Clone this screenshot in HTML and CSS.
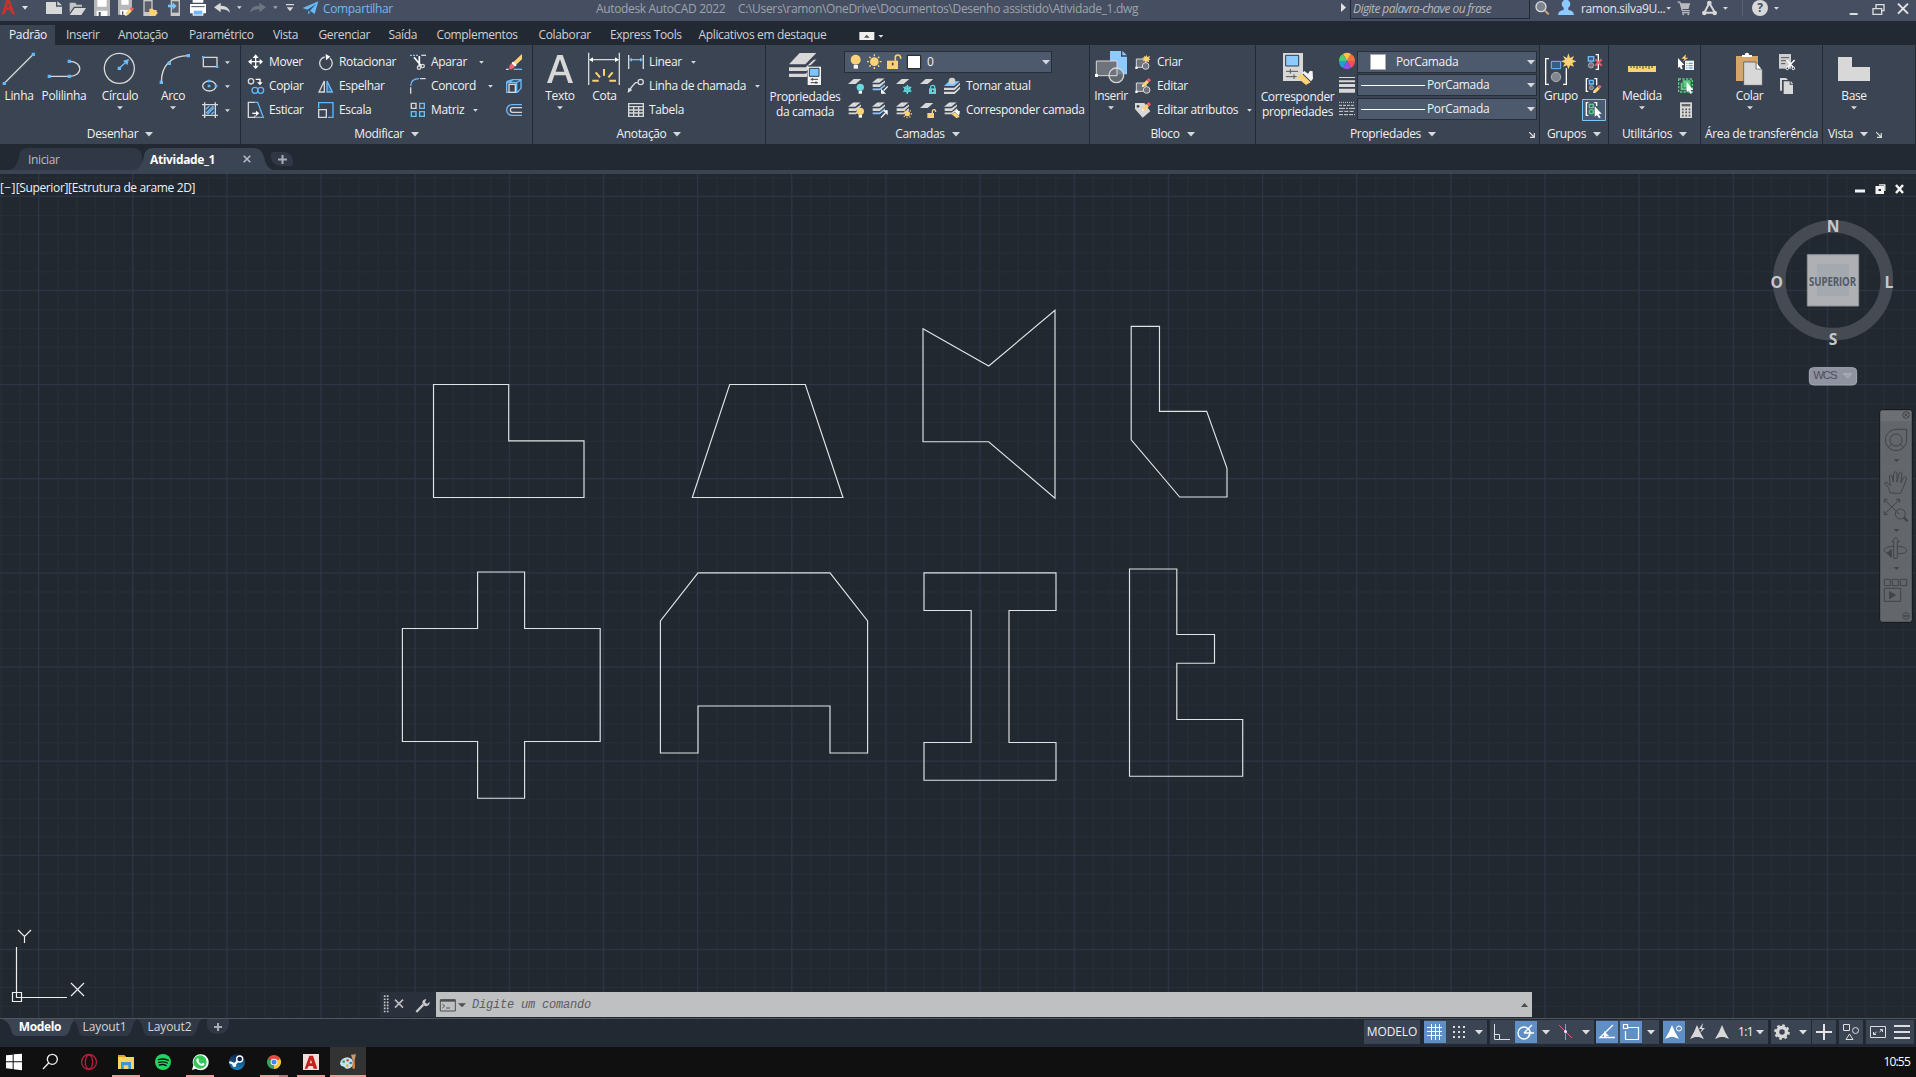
FILE: index.html
```html
<!DOCTYPE html>
<html lang="pt-BR">
<head>
<meta charset="utf-8">
<title>Autodesk AutoCAD 2022</title>
<link rel="stylesheet" href="styles.css">
</head>
<body>
<svg width="0" height="0" class="defs">
  <defs>
    <symbol id="dn" viewBox="0 0 8 5"><path d="M0 0H8L4 4.6Z" fill="#d6d8dc"/></symbol>
    <symbol id="sheet" viewBox="0 0 40 15"><path d="M17 0H40L23 15H0Z" fill="#d8d8d8"/></symbol>
    <symbol id="stack" viewBox="0 0 42 40"><path d="M17 0H40L23 14H0Z" fill="#d8d8d8"/><path d="M2 19H24L41 7V12L25 27H2Z" fill="#d8d8d8"/><path d="M2 32H24L41 19V25L25 38H2Z" fill="#d8d8d8"/></symbol>
    <symbol id="stackb" viewBox="0 0 42 40"><path d="M17 0H40L23 14H0Z" fill="#d8d8d8"/><path d="M2 19H24L41 7V12L25 27H2Z" fill="#d8d8d8"/><path d="M2 32H24L41 19V25L25 38H2Z" fill="#87c5fb"/></symbol>
    <symbol id="pencil" viewBox="0 0 30 30"><path d="M3 27L5 18L17 6L24 13L12 25Z" fill="#fcd277"/><path d="M17 6L23 0L30 7L24 13Z" fill="#f4606c"/><path d="M3 27L5 20L10 25Z" fill="#fff"/></symbol>
  </defs>
</svg>

<header class="titlebar">
  <svg width="42" height="21" viewBox="0 0 126 63"><path d="M4 46L19 0H29L46 46L34 40L30 30H18L15 41Z" fill="#c8332d"/><path d="M21 22H28L24 8Z" fill="#454f61"/><path d="M66 18H84L75 29Z" fill="#e0e0e0"/></svg>
  <svg width="24" height="21" viewBox="126 0 72 63"><path d="M138 6H168V20H186V42H138Z" fill="#d8d8d8"/><path d="M172 4L186 16H172Z" fill="#d8d8d8"/></svg>
  <svg width="24" height="21" viewBox="198 0 72 63"><path d="M209 8H226L230 14H246V20H222L209 38Z" fill="#c4c4c4"/><path d="M224 24H258L244 45H209Z" fill="#d8d8d8"/></svg>
  <svg width="24" height="21" viewBox="270 0 72 63"><path d="M282 0H330V48H282Z" fill="#b8b8b8"/><path d="M292 0H320V20H292ZM290 32H322V48H290Z" fill="#fff"/><path d="M296 36H302V48H296Z" fill="#454f61"/></svg>
  <svg width="26" height="21" viewBox="342 0 78 63"><path d="M354 0H396V28L380 44H354Z" fill="#b8b8b8"/><path d="M364 0H386V14H364ZM361 30H384V44H361Z" fill="#fff"/><path d="M366 34H370V44H366Z" fill="#454f61"/><use href="#pencil" x="372" y="20" width="30" height="30"/></svg>
  <svg width="24" height="21" viewBox="420 0 72 63"><path d="M430 0H458V48H430Z" fill="#c8c8c8"/><path d="M434 4H454V36H434Z" fill="#5a5f68"/><path d="M448 26H458L462 30H470V36L474 38L466 48H448Z" fill="#fcd277"/></svg>
  <svg width="22" height="21" viewBox="492 0 66 63"><path d="M512 0H540V48H512Z" fill="#c8c8c8"/><path d="M516 4H536V38H516Z" fill="#5a5f68"/><path d="M504 14H518V7L530 18L518 29V22H504Z" fill="#7cc5ff"/></svg>
  <svg width="24" height="21" viewBox="558 0 72 63"><path d="M578 0H610V8H578ZM570 12H618V40H570Z" fill="#fff"/><path d="M578 28H610V47H578Z" fill="#fff"/><path d="M581 32H607V44H581Z" fill="#74b9f5"/><path d="M574 20H614" stroke="#454f61" stroke-width="3"/></svg>
  <svg width="36" height="21" viewBox="630 0 108 63"><path d="M642 22L662 8V17Q686 16 690 38Q680 27 662 28V37Z" fill="#d8d8d8"/><path d="M711 19H725L718 27Z" fill="#d8d8d8"/></svg>
  <svg width="36" height="21" viewBox="738 0 108 63"><path d="M798 22L778 8V17Q754 16 750 38Q760 27 778 28V37Z" fill="#6d7584"/><path d="M819 19H833L826 27Z" fill="#a4a8b0"/></svg>
  <svg width="17" height="21" viewBox="846 0 51 63"><path d="M858 12H882V16H858ZM860 22H880L870 34Z" fill="#d8d8d8"/></svg>
  <svg width="26" height="21" viewBox="897 0 78 63"><path d="M908 24L955 4L944 42L930 32L948 12L922 29Z" fill="#64baf9"/><path d="M924 32L930 36L926 44Z" fill="#64baf9"/></svg>
  <span class="share">Compartilhar</span>
  <span class="apptitle">Autodesk AutoCAD 2022</span>
  <span class="path">C:\Users\ramon\OneDrive\Documentos\Desenho assistido\Atividade_1.dwg</span>
  <svg class="play" width="5" height="9" viewBox="0 0 5 9"><path d="M0 0L5 4.5L0 9Z" fill="#e0e0e0"/></svg>
  <div class="search">Digite palavra-chave ou frase</div>
  <svg width="22" height="21" viewBox="54 0 66 63"><circle cx="78" cy="20" r="15" fill="#7c8494" stroke="#dcdcdc" stroke-width="4"/><path d="M90 32L101 43" stroke="#d9a878" stroke-width="6"/></svg>
  <svg width="26" height="21" viewBox="120 0 78 63"><circle cx="153" cy="12" r="13" fill="#8ccaff"/><path d="M129 45Q130 31 146 30V20H160V30Q176 31 177 45Z" fill="#8ccaff"/></svg>
  <span class="user">ramon.silva9U...</span>
  <svg width="9" height="21" viewBox="441 0 27 63"><path d="M448 21H462L455 29Z" fill="#d8d8d8"/></svg>
  <svg width="26" height="21" viewBox="486 0 78 63"><path d="M500 6L507 7L514 32H536M508 12H535L531 25H512M513 38H536" fill="none" stroke="#b8bac0" stroke-width="4"/><path d="M508 12H535L531 26H512Z" fill="#b8bac0"/><circle cx="517" cy="43" r="3" fill="#b8bac0"/><circle cx="532" cy="43" r="3" fill="#b8bac0"/></svg>
  <svg width="34" height="21" viewBox="558 0 102 63"><path d="M589 9L574 38H606Z" fill="none" stroke="#d8d8d8" stroke-width="6"/><circle cx="589" cy="9" r="7" fill="#d8d8d8"/><circle cx="574" cy="39" r="7" fill="#d8d8d8"/><circle cx="605" cy="39" r="7" fill="#d8d8d8"/><path d="M630 21H645L637 29Z" fill="#d8d8d8"/></svg>
  <span class="tsep"></span>
  <div class="help">?</div>
  <svg width="20" height="21" viewBox="756 0 60 63"><path d="M774 21H789L781 29Z" fill="#d8d8d8"/></svg>
  <svg class="winctl" width="66" height="21" viewBox="1000 0 198 63"><path d="M1002 42H1026" stroke="#ddd" stroke-width="6"/><path d="M1072 26H1098V43H1072ZM1081 26V14H1105V32H1098" fill="none" stroke="#ddd" stroke-width="4"/><path d="M1147 11L1177 41M1177 11L1147 41" stroke="#e4e4e4" stroke-width="6"/></svg>
</header>

<nav class="tabs">
  <span class="on">Padrão</span><span>Inserir</span><span>Anotação</span><span>Paramétrico</span><span>Vista</span><span>Gerenciar</span><span>Saída</span><span>Complementos</span><span>Colaborar</span><span>Express Tools</span><span>Aplicativos em destaque</span>
  <svg width="30" height="20" viewBox="290 75 90 60"><path d="M297 96H342V120H297Z" fill="#eee"/><path d="M311 113H328L319 104Z" fill="#555"/><path d="M354 105H369L362 113Z" fill="#ddd"/></svg>
</nav>

<main class="ribbon">
  <section class="panel w1">
    <div class="body">
      <div class="big b1"><svg width="38" height="37" viewBox="0 150 114 111"><path d="M13 250L100 163" stroke="#d8d8d8" stroke-width="4"/><path d="M8 246H18V255H8ZM95 158H105V168H95Z" fill="#5db8ff"/></svg><b>Linha</b></div>
      <div class="big b2"><svg width="52" height="37" viewBox="114 150 156 111"><path d="M148 229H208M208 184C250 184 250 229 208 229" fill="none" stroke="#d8d8d8" stroke-width="4"/><path d="M143 224H153V234H143ZM203 224H213V234H203ZM203 179H213V189H203Z" fill="#5db8ff"/></svg><b>Polilinha</b></div>
      <div class="big b3"><svg width="60" height="37" viewBox="270 150 180 111"><circle cx="358" cy="205" r="45" fill="none" stroke="#d8d8d8" stroke-width="4"/><path d="M358 205L382 182" stroke="#6cbcfc" stroke-width="4"/><path d="M353 200H363V210H353ZM387 177L382 196L369 182Z" fill="#6cbcfc"/></svg><b>Círculo</b><svg class="ar"><use href="#dn"/></svg></div>
      <div class="big b4"><svg width="46" height="37" viewBox="450 150 138 111"><path d="M484 247C484 195 515 167 565 167" fill="none" stroke="#d8d8d8" stroke-width="4"/><path d="M479 242H489V252H479ZM503 185H513V195H503ZM560 162H570V172H560Z" fill="#6cbcfc"/></svg><b>Arco</b><svg class="ar"><use href="#dn"/></svg></div>
      <div class="col">
        <svg width="44" height="24" viewBox="588 150 132 72"><path d="M610 172H651V200H610Z" fill="none" stroke="#d8d8d8" stroke-width="4"/><path d="M606 168H613V175H606ZM647 197H655V204H647Z" fill="#5db8ff"/><path d="M675 184H690L682 192Z" fill="#d8d8d8"/></svg>
        <svg width="44" height="24" viewBox="588 222 132 72"><ellipse cx="628" cy="258" rx="20" ry="15" fill="none" stroke="#d8d8d8" stroke-width="4"/><path d="M623 239H631V247H623ZM623 254H631V262H623ZM644 254H652V262H644Z" fill="#5db8ff"/><path d="M675 256H690L682 264Z" fill="#d8d8d8"/></svg>
        <svg width="44" height="24" viewBox="588 294 132 72"><path d="M606 314H654M606 346H654M614 307V354M646 307V354" stroke="#d8d8d8" stroke-width="4"/><path d="M618 328L628 318M618 340L640 318M622 343L642 323M634 343L642 335" stroke="#6cbcfc" stroke-width="4"/><path d="M675 328H690L682 336Z" fill="#d8d8d8"/></svg>
      </div>
    </div>
    <h2>Desenhar<svg><use href="#dn"/></svg></h2>
  </section>

  <section class="panel w2">
    <div class="body">
      <div class="col c74">
        <div class="row"><svg width="28" height="24" viewBox="723 150 84 72"><path d="M767 168V204M749 185H785" stroke="#fff" stroke-width="4"/><path d="M767 163L776 174H758ZM767 207L758 197H776ZM744 185L755 176V194ZM789 185L779 176V194Z" fill="#fff"/></svg>Mover</div>
        <div class="row"><svg width="28" height="24" viewBox="723 222 84 72"><circle cx="753" cy="244" r="8" fill="none" stroke="#d8d8d8" stroke-width="4"/><path d="M767 238H780V250" fill="none" stroke="#fff" stroke-width="4"/><path d="M771 247H788L780 256Z" fill="#fff"/><circle cx="765" cy="271" r="9" fill="none" stroke="#5db8ff" stroke-width="4"/><circle cx="782" cy="271" r="9" fill="none" stroke="#5db8ff" stroke-width="4"/></svg>Copiar</div>
        <div class="row"><svg width="28" height="24" viewBox="723 294 84 72"><path d="M765 307H745V352H765V346" fill="none" stroke="#d8d8d8" stroke-width="4"/><path d="M763 307H773L790 352H768" fill="none" stroke="#5db8ff" stroke-width="4"/><path d="M757 340H770" stroke="#fff" stroke-width="4"/><path d="M768 332L778 340L768 348Z" fill="#fff"/></svg>Esticar</div>
      </div>
      <div class="col c92">
        <div class="row"><svg width="24" height="24" viewBox="945 150 72 72"><path d="M974 171A19 19 0 1 0 990 175" fill="none" stroke="#d8d8d8" stroke-width="4"/><path d="M977 162L991 170L978 181Z" fill="#fff"/></svg>Rotacionar</div>
        <div class="row"><svg width="24" height="24" viewBox="945 222 72 72"><path d="M973 243V276H957Z" fill="none" stroke="#d8d8d8" stroke-width="4"/><path d="M981 243V276H997Z" fill="#3a6d9c" stroke="#6cbcfc" stroke-width="4"/></svg>Espelhar</div>
        <div class="row"><svg width="24" height="24" viewBox="945 294 72 72"><path d="M956 325V308H999V352H984" fill="none" stroke="#5db8ff" stroke-width="4"/><path d="M956 329H979V352H956Z" fill="none" stroke="#d8d8d8" stroke-width="4"/></svg>Escala</div>
      </div>
      <div class="col c93">
        <div class="row"><svg width="24" height="24" viewBox="21 150 72 72"><path d="M30 166H55" stroke="#7cc5ff" stroke-width="4" stroke-dasharray="6 3"/><path d="M64 166H78" stroke="#d8d8d8" stroke-width="4"/><path d="M42 172L64 198M58 168V198" stroke="#fff" stroke-width="5"/><circle cx="57" cy="203" r="5" fill="none" stroke="#d8d8d8" stroke-width="4"/><circle cx="68" cy="198" r="5" fill="none" stroke="#d8d8d8" stroke-width="4"/></svg>Aparar<svg class="a g11"><use href="#dn"/></svg></div>
        <div class="row"><svg width="24" height="24" viewBox="21 222 72 72"><path d="M60 236H77M32 262V281" stroke="#d8d8d8" stroke-width="4"/><path d="M32 258Q33 236 57 236" fill="none" stroke="#6cbcfc" stroke-width="4"/></svg>Concord<svg class="a g11"><use href="#dn"/></svg></div>
        <div class="row"><svg width="24" height="24" viewBox="21 294 72 72" fill="none" stroke-width="4"><path d="M34 310H48V325H34Z" stroke="#d8d8d8"/><path d="M59 310H73V325H59ZM34 335H48V349H34ZM59 335H73V349H59Z" stroke="#6cbcfc"/></svg>Matriz<svg class="a"><use href="#dn"/></svg></div>
      </div>
      <div class="col">
        <svg width="32" height="24" viewBox="300 150 96 72"><path d="M366 162V178L342 200L334 192Z" fill="#fcd277"/><path d="M334 190L345 200L336 208H328V198Z" fill="#f4606c"/><path d="M337 187L348 197" stroke="#fff" stroke-width="6"/><path d="M318 208H326" stroke="#ddd" stroke-width="4"/><path d="M341 208H366" stroke="#6cbcfc" stroke-width="4"/></svg>
        <svg width="32" height="24" viewBox="300 222 96 72" fill="none" stroke-width="4"><path d="M320 247V277H350V247ZM320 245L338 239H363V265L352 277M338 239L330 246M363 239L352 247M320 248H352" stroke="#6cbcfc"/><path d="M327 253H346V277H327Z" stroke="#d8d8d8"/></svg>
        <svg width="32" height="24" viewBox="300 294 96 72" fill="none" stroke-width="4"><path d="M366 314H336A16 16 0 0 0 336 346H366" stroke="#6cbcfc"/><path d="M366 323H338A7 7 0 0 0 338 337H366" stroke="#d8d8d8"/></svg>
      </div>
    </div>
    <h2>Modificar<svg><use href="#dn"/></svg></h2>
  </section>

  <section class="panel w3">
    <div class="body">
      <div class="big b5"><svg width="54" height="37" viewBox="399 150 162 111"><path d="M441 249L472 165H488L519 249H505L497 226H463L455 249ZM467 215H493L480 178Z" fill="#d8d8d8" fill-rule="evenodd"/></svg><b>Texto</b><svg class="ar"><use href="#dn"/></svg></div>
      <div class="big b6"><svg width="35" height="37" viewBox="561 150 105 111"><path d="M566 158V255M658 158V255M570 179H654" stroke="#d8d8d8" stroke-width="4"/><path d="M567 179L579 172V186ZM657 179L645 172V186Z" fill="#fff"/><path d="M612 207V227M587 217L600 232M638 217L625 232M577 242H596M628 242H648" stroke="#fcd277" stroke-width="6"/></svg><b>Cota</b></div>
      <div class="col">
        <div class="row"><svg width="27" height="24" viewBox="666 150 81 72"><path d="M686 165V207M730 165V207" stroke="#d8d8d8" stroke-width="4"/><path d="M690 179H726" stroke="#6cbcfc" stroke-width="4"/><path d="M687 179L696 173V185ZM729 179L720 173V185Z" fill="#6cbcfc"/></svg>Linear<svg class="a"><use href="#dn"/></svg></div>
        <div class="row"><svg width="27" height="24" viewBox="666 222 81 72"><circle cx="722" cy="246" r="8" fill="none" stroke="#d8d8d8" stroke-width="4"/><path d="M713 248H706Q698 256 688 270" fill="none" stroke="#d8d8d8" stroke-width="4"/><path d="M683 279L685 263L697 270Z" fill="#ddd"/></svg>Linha de chamada<svg class="a"><use href="#dn"/></svg></div>
        <div class="row"><svg width="27" height="24" viewBox="666 294 81 72"><path d="M686 311H730V349H686ZM686 320H730M686 330H730M686 339H730M701 320V349M716 320V349" fill="none" stroke="#d8d8d8" stroke-width="4"/></svg>Tabela</div>
      </div>
    </div>
    <h2>Anotação<svg><use href="#dn"/></svg></h2>
  </section>

  <section class="panel w4">
    <div class="body">
      <div class="big b7"><svg width="78" height="37" viewBox="18 150 234 111"><path d="M119 159H169L136 193H87ZM87 202H137L160 180L170 178L152 196H145V208L140 213H87ZM87 221H137L142 217V228L140 231H87Z" fill="#d8d8d8"/><path d="M143 200H183V255H143Z" fill="#f4f4f4"/><path d="M148 205H177V229H148Z" fill="#7cc5ff" stroke="#333c4a" stroke-width="3"/><path d="M152 238H174M152 248H174M157 234V242M168 244V252" stroke="#444" stroke-width="3"/></svg><b class="two">Propriedades<br>da camada</b></div>
      <div class="col">
        <div class="row"><div class="combo c208"><svg width="82" height="20" viewBox="255 156 246 60"><circle cx="287" cy="179" r="15" fill="#fcd277"/><path d="M281 195H294V206H281Z" fill="#f4f4f4"/><circle cx="343" cy="185" r="13" fill="#fcd277"/><g stroke="#fcd277" stroke-width="4"><path d="M343 163V169M343 201V207M321 185H327M359 185H365M328 170L332 174M354 196L358 200M358 170L354 174M332 196L328 200"/></g><path d="M381 182H414V207H381Z" fill="#fcd277"/><path d="M406 182V172Q406 165 414 165Q422 165 422 176" fill="none" stroke="#fcd277" stroke-width="5"/><path d="M398 188V196" stroke="#444" stroke-width="5"/><path d="M442 166H482V206H442Z" fill="#fff" stroke="#111" stroke-width="3"/></svg>0<i></i><svg class="ca"><use href="#dn"/></svg></div></div>
        <div class="row"><svg width="26" height="24" viewBox="252 222 78 72"><use href="#sheet" x="264" y="237" width="40" height="15"/><circle cx="301" cy="262" r="11" fill="#6ad6de"/><path d="M296 273H306V281H296Z" fill="#fff"/></svg><svg width="24" height="24" viewBox="330 222 72 72"><use href="#stackb" x="336" y="235" width="40" height="38"/><path d="M383 259L371 272" stroke="#fff" stroke-width="4"/><path d="M363 281V266L378 281Z" fill="#fff"/></svg><svg width="24" height="24" viewBox="402 222 72 72"><use href="#sheet" x="408" y="237" width="40" height="15"/><path d="M442 254V282M430 261L454 275M454 261L430 275" stroke="#5fd4dc" stroke-width="4"/><circle cx="442" cy="268" r="8" fill="none" stroke="#5fd4dc" stroke-width="4"/></svg><svg width="24" height="24" viewBox="474 222 72 72"><use href="#sheet" x="480" y="237" width="40" height="15"/><path d="M507 265H528V282H507Z" fill="#5fd4dc"/><path d="M512 266V260Q512 256 518 256Q524 256 524 260V266" fill="none" stroke="#5fd4dc" stroke-width="4"/><path d="M518 270V276" stroke="#444" stroke-width="4"/></svg><svg width="24" height="24" viewBox="546 222 72 72"><path d="M567 244H600L582 258H552Z" fill="#7cc5ff"/><circle cx="576" cy="243" r="10" fill="#d0d0d0"/><path d="M552 263H583L600 248V254L584 270H552ZM552 275H583L600 260V266L584 282H552Z" fill="#d8d8d8"/></svg>Tornar atual</div>
        <div class="row"><svg width="26" height="24" viewBox="252 294 78 72"><use href="#stack" x="264" y="307" width="40" height="38"/><circle cx="301" cy="334" r="11" fill="#fcd277"/><path d="M296 345H306V353H296Z" fill="#fff"/></svg><svg width="24" height="24" viewBox="330 294 72 72"><use href="#stackb" x="336" y="307" width="40" height="38"/><path d="M363 353L376 339" stroke="#fff" stroke-width="4"/><path d="M383 331V346L369 331Z" fill="#fff"/></svg><svg width="24" height="24" viewBox="402 294 72 72"><use href="#stack" x="408" y="307" width="40" height="38"/><circle cx="442" cy="341" r="8" fill="#fcd277"/><circle cx="442" cy="341" r="12" fill="none" stroke="#fcd277" stroke-width="4" stroke-dasharray="3 6"/></svg><svg width="24" height="24" viewBox="474 294 72 72"><use href="#sheet" x="480" y="309" width="40" height="15"/><path d="M502 339H522V354H502Z" fill="#fcd277"/><path d="M517 340V334Q517 329 522 329Q527 329 527 336" fill="none" stroke="#fcd277" stroke-width="4"/></svg><svg width="24" height="24" viewBox="546 294 72 72"><use href="#stack" x="552" y="307" width="40" height="38"/><path d="M575 343L585 337L599 350L590 355Z" fill="#fcd277"/><path d="M584 335L592 328L596 334L600 333L597 347Z" fill="#fff"/></svg>Corresponder camada</div>
      </div>
    </div>
    <h2>Camadas<svg><use href="#dn"/></svg></h2>
  </section>

  <section class="panel w5">
    <div class="body">
      <div class="big b8"><svg width="42" height="37" viewBox="990 150 126 111"><path d="M1050 153H1083V170H1101V223H1050Z" fill="#8ccaff"/><path d="M1087 153L1101 166H1087Z" fill="#8ccaff"/><path d="M1009 183H1071V227H1009Z" fill="#6e737c" stroke="#d8d8d8" stroke-width="3"/><circle cx="1069" cy="226" r="22" fill="#6e737c" fill-opacity=".8" stroke="#d8d8d8" stroke-width="4"/><path d="M1071 204V227H1048" fill="none" stroke="#d8d8d8" stroke-width="3"/><path d="M1005 222H1014V231H1005Z" fill="#fff"/></svg><b>Inserir</b><svg class="ar"><use href="#dn"/></svg></div>
      <div class="col">
        <div class="row"><svg width="25" height="24" viewBox="1116 150 75 72"><path d="M1129 177H1158V202H1129Z" fill="#6e737c" stroke="#d8d8d8" stroke-width="3"/><circle cx="1157" cy="198" r="10" fill="#6e737c" stroke="#d8d8d8" stroke-width="3"/><path d="M1126 200H1133V207H1126Z" fill="#fff"/><path d="M1159 164L1162 171L1170 168L1167 176L1172 178L1166 181L1168 187L1160 184L1157 189L1155 182L1148 184L1152 177L1146 174L1153 172L1152 167L1157 170Z" fill="#fcd277"/></svg>Criar</div>
        <div class="row"><svg width="25" height="24" viewBox="1116 222 75 72"><path d="M1129 249H1158V274H1129Z" fill="#6e737c" stroke="#d8d8d8" stroke-width="3"/><circle cx="1160" cy="270" r="10" fill="#6e737c" stroke="#d8d8d8" stroke-width="3"/><path d="M1126 272H1133V279H1126Z" fill="#fff"/><use href="#pencil" x="1143" y="234" width="30" height="30"/></svg>Editar</div>
        <div class="row"><svg width="25" height="24" viewBox="1116 294 75 72"><path d="M1125 309H1153L1171 334L1148 353L1125 327Z" fill="#d8d8d8"/><circle cx="1134" cy="319" r="4" fill="#3b4453"/><use href="#pencil" x="1143" y="306" width="30" height="30"/></svg>Editar atributos<svg class="a"><use href="#dn"/></svg></div>
      </div>
    </div>
    <h2>Bloco<svg><use href="#dn"/></svg></h2>
  </section>

  <section class="panel w6">
    <div class="body">
      <div class="big b9"><svg width="83" height="37" viewBox="318 150 249 111"><path d="M399 159H459V243H399Z" fill="#d8d8d8"/><path d="M407 166H446V198H407Z" fill="#8ccaff" stroke="#333c4a" stroke-width="3"/><path d="M408 214H444M408 230H440M421 207V221M432 223V237" stroke="#555" stroke-width="3"/><path d="M440 232L454 220L482 247L468 255Z" fill="#fcd277"/><path d="M457 218L463 213L474 221L480 212L488 214L489 236L483 244Z" fill="#f4f4f4"/></svg><b class="two">Corresponder<br>propriedades</b></div>
      <div class="col props">
        <div class="row"><svg width="18" height="24" viewBox="567 150 54 72"><path d="M591 183L579 162A24 24 0 0 1 603 162Z" fill="#fdc23e"/><path d="M591 183L603 162A24 24 0 0 1 615 183Z" fill="#f2743c"/><path d="M591 183H615A24 24 0 0 1 603 204Z" fill="#ef4f5f"/><path d="M591 183L603 204A24 24 0 0 1 579 204Z" fill="#8d4ff0"/><path d="M591 183L579 204A24 24 0 0 1 567 183Z" fill="#1d9fd8"/><path d="M591 183H567A24 24 0 0 1 579 162Z" fill="#4fca7c"/></svg><div class="combo c180"><span class="sw"></span>PorCamada<i></i><svg class="ca"><use href="#dn"/></svg></div></div>
        <div class="row"><svg width="18" height="24" viewBox="567 222 54 72"><path d="M567 231H615V234H567ZM567 241H615V247H567ZM567 252H615V261H567ZM567 266H615V278H567Z" fill="#d8d8d8"/></svg><div class="combo c180"><span class="ln"></span>PorCamada<i></i><svg class="ca"><use href="#dn"/></svg></div></div>
        <div class="row"><svg width="18" height="24" viewBox="567 294 54 72" stroke="#d8d8d8" stroke-width="3"><path d="M567 307H615" stroke-dasharray="3 3"/><path d="M567 316H615" stroke-dasharray="9 3"/><path d="M567 325H615" stroke-dasharray="18 3 6 3"/><path d="M567 334H615" stroke-dasharray="12 4"/><path d="M567 344H615" stroke-dasharray="12 3"/></svg><div class="combo c180"><span class="ln"></span>PorCamada<i></i><svg class="ca"><use href="#dn"/></svg></div></div>
      </div>
    </div>
    <h2 class="wide">Propriedades<svg><use href="#dn"/></svg><svg class="la" viewBox="0 0 6 6"><path d="M0 0L5 5M5.3 1V5.3H1" fill="none" stroke="#ddd" stroke-width="1.2"/></svg></h2>
  </section>

  <section class="panel w7">
    <div class="body">
      <div class="big b10"><svg width="42" height="37" viewBox="72 150 126 111"><path d="M99 176H89V253H99M141 253H151V205" fill="none" stroke="#fff" stroke-width="4"/><path d="M106 184H134V206H106Z" fill="#3c5d80" stroke="#6cbcfc" stroke-width="3"/><circle cx="120" cy="231" r="14" fill="#82868e" stroke="#aeb1b6" stroke-width="3"/><path d="M157 160L162 174L174 168L169 179L181 184L169 189L174 200L162 196L157 208L153 196L141 200L147 189L135 184L147 179L141 168L153 174Z" fill="#fcd277"/></svg><b>Grupo</b></div>
      <div class="col">
        <svg width="26" height="24" viewBox="198 150 78 72"><path d="M217 170H233V183H217Z" fill="#3c5d80" stroke="#6cbcfc" stroke-width="4"/><circle cx="225" cy="196" r="8" fill="#72767e" stroke="#aaa" stroke-width="3"/><path d="M239 164H247V208H239" fill="none" stroke="#fff" stroke-width="4"/><path d="M238 178L257 197M257 178L238 197" stroke="#f2606c" stroke-width="6"/></svg>
        <svg width="26" height="24" viewBox="198 222 78 72"><path d="M217 236H211V274H217M235 236H242V256" fill="none" stroke="#fff" stroke-width="4"/><path d="M220 241H232V252H220Z" fill="#3c5d80" stroke="#6cbcfc" stroke-width="4"/><circle cx="226" cy="263" r="6" fill="#72767e" stroke="#aaa" stroke-width="3"/><use href="#pencil" x="229" y="254" width="28" height="28"/></svg>
        <svg width="26" height="24" viewBox="198 294 78 72"><path d="M199.500 298.500H268.500V361.500H199.500Z" fill="#485a74" stroke="#7cc5ff" stroke-width="3"/><path d="M217 308H211V346H217M235 308H242V318" fill="none" stroke="#fff" stroke-width="4"/><path d="M220 313H232V323H220Z" fill="none" stroke="#5fce82" stroke-width="4"/><circle cx="226" cy="335" r="6" fill="none" stroke="#5fce82" stroke-width="4"/><path d="M236 319L257 341L248 342L254 352L249 355L243 345L236 350Z" fill="#fff"/></svg>
      </div>
    </div>
    <h2>Grupos<svg><use href="#dn"/></svg></h2>
  </section>

  <section class="panel w8">
    <div class="body">
      <div class="big b11"><svg width="66" height="37" viewBox="279 150 198 111"><path d="M336 198H420V216H336Z" fill="#fcd277"/><path d="M345 198V204M354 198V204M363 198V207M372 198V204M381 198V207M390 198V204M399 198V207M408 198V204" stroke="#3b4453" stroke-width="3"/></svg><b>Medida</b><svg class="ar"><use href="#dn"/></svg></div>
      <div class="col">
        <svg width="25" height="24" viewBox="477 150 75 72"><path d="M507 182H534V210H507Z" fill="#f4f4f4"/><path d="M511 190H514M511 197H514M511 204H514M518 190H530M518 197H530M518 204H530" stroke="#3a8fdc" stroke-width="3"/><path d="M486 174L505 195L497 196L500 207L495 208L491 200L486 204Z" fill="#fff"/><path d="M510 163L496 176H506L500 185L517 173H508Z" fill="#fcd277"/></svg>
        <svg width="25" height="24" viewBox="477 222 75 72"><path d="M488 237H529V276H488Z" fill="none" stroke="#5fce82" stroke-width="4" stroke-dasharray="7 4"/><path d="M494 248H500V241H524V266H516V271H494Z" fill="#5fce82"/><path d="M501 248V264H510" fill="none" stroke="#3b4453" stroke-width="2"/><path d="M512 246L532 269L524 270L528 280L523 281L518 272L512 276Z" fill="#fff"/></svg>
        <svg width="25" height="24" viewBox="477 294 75 72"><path d="M492 307H528V354H492Z" fill="#d8d8d8"/><path d="M497 312H523V319H497Z" fill="#666"/><path d="M498 328H524M498 337H524M498 347H524" stroke="#555" stroke-width="5" stroke-dasharray="5 5"/></svg>
      </div>
    </div>
    <h2>Utilitários<svg><use href="#dn"/></svg></h2>
  </section>

  <section class="panel w9">
    <div class="body">
      <div class="big b12"><svg width="49" height="37" viewBox="627 150 147 111"><path d="M660 168H726V243H660Z" fill="#d5a56c"/><path d="M678 171V165H686Q687 158 693 158Q699 158 700 165H708V171Z" fill="#fff"/><path d="M683 186H720V207H739V256H683Z" fill="#d8d8d8" stroke="#3b4453" stroke-width="2"/><path d="M722 190L736 206H722Z" fill="#fff"/></svg><b>Colar</b><svg class="ar"><use href="#dn"/></svg></div>
      <div class="col">
        <svg width="28" height="24" viewBox="774 150 84 72"><path d="M789 162H825V206H789Z" fill="#cfcfcf"/><path d="M795 173H819M795 182H814M795 191H808" stroke="#555" stroke-width="3"/><path d="M811 180L832 202M836 180L815 202" stroke="#fff" stroke-width="4"/><circle cx="814" cy="205" r="4" fill="#3b4453" stroke="#fff" stroke-width="3"/><circle cx="832" cy="205" r="4" fill="#3b4453" stroke="#fff" stroke-width="3"/></svg>
        <svg width="28" height="24" viewBox="774 222 84 72"><path d="M792 234H810L816 240H798V272H792Z" fill="#d8d8d8"/><path d="M803 244H821V254H831V282H803ZM824 243L832 251H824Z" fill="#d8d8d8"/></svg>
      </div>
    </div>
    <h2>Área de transferência</h2>
  </section>

  <section class="panel w10">
    <div class="body"><div class="big b13"><svg width="62" height="37" viewBox="921 150 186 111"><path d="M966 171H1008V201H1062V243H966Z" fill="#d8d8d8"/></svg><b>Base</b><svg class="ar"><use href="#dn"/></svg></div></div>
    <h2 class="vista">Vista<svg><use href="#dn"/></svg><svg class="la" viewBox="0 0 6 6"><path d="M0 0L5 5M5.300 1V5.300H1" fill="none" stroke="#ddd" stroke-width="1.200"/></svg></h2>
  </section>
</main>

<nav class="files">
  <div class="ftab">Iniciar</div>
  <div class="ftab cur">Atividade_1<svg width="8" height="8" viewBox="0 0 8 8"><path d="M.7 .7L7.300 7.300M7.300 .7L.7 7.300" stroke="#b8bbc1" stroke-width="1.600"/></svg></div>
  <div class="fadd"><svg width="9" height="9" viewBox="0 0 9 9"><path d="M4.500 0V9M0 4.500H9" stroke="#a9acb2" stroke-width="2"/></svg></div>
</nav>

<div class="canvas">
  <svg class="draw" width="1916" height="844" viewBox="0 174 1916 844">
    <defs>
      <pattern id="minor" x="38.400" y="196.100" width="18.830" height="18.830" patternUnits="userSpaceOnUse"><path d="M0 .5H18.830M.5 0V18.830" stroke="#262e38" stroke-width="1"/></pattern>
      <pattern id="major" x="38" y="195.700" width="94.150" height="94.150" patternUnits="userSpaceOnUse"><path d="M0 .5H94.150M.5 0V94.150" stroke="#2e3646" stroke-width="1"/></pattern>
    </defs>
    <path d="M0 174H1916V1018H0Z" fill="url(#minor)"/>
    <path d="M0 174H1916V1018H0Z" fill="url(#major)"/>
    <g fill="none" stroke="#e2e3e4" stroke-width="1.150">
      <path d="M433.500 384.500H508.700V440.800H584V497.500H433.500Z"/>
      <path d="M729.700 384.500H805.300L843 497.500H692.300Z"/>
      <path d="M477.600 572H524.600V628.500H600.200V741.500H524.600V798.200H477.600V741.500H402.400V628.500H477.600Z"/>
      <path d="M698 572.800H830L867.600 620.900V753H830V706H698V753H660.400V620.900Z"/>
      <path d="M923 328.800L988.700 366L1055 310.300V498.300L988.700 441.700H923Z"/>
      <path d="M1131.200 326.400H1159.500V411.400H1206.700L1227 468.300V497H1179.700L1131.200 439.800Z"/>
      <path d="M924 572.800H1056V610.500H1009V742.500H1056V780.200H924V742.500H971.200V610.500H924Z"/>
      <path d="M1129.500 569H1176.800V634.500H1214.500V663.200H1176.800V719.500H1242.700V776.200H1129.500Z"/>
    </g>
    <g fill="none" stroke="#eee" stroke-width="1.200"><path d="M16.500 947V997.500H67M12.500 992.500H21.500V1001.500H12.500ZM18 930L24.500 936.500L31 930M24.500 936.500V943M71 983L84 996M84 983L71 996"/></g>
    <g fill="none" stroke="#f2f2f2" stroke-width="3"><path d="M1855 191H1865"/><path d="M1877 187.500H1882.500V192.500H1877Z"/><path d="M1879 184.800H1884.800V191" stroke-width="1.300"/><path d="M1896 185L1903 193M1903 185L1896 193" stroke-width="2.500"/></g>
  </svg>
  <div class="view"><span>[−]</span>[Superior][Estrutura de arame 2D]</div>
  <svg class="cube" width="130" height="180" viewBox="150 50 390 540">
    <circle cx="351" cy="270" r="161.500" fill="none" stroke="#464b53" stroke-width="38"/>
    <path d="M274 193H428V347H274Z" fill="#aeb0b3" stroke="#8f9295" stroke-width="3"/><path d="M303 222H399V317H303Z" fill="#a3a9ae"/>
    <g font-family="Open Sans, sans-serif" font-weight="700" fill="#c6c8ca" font-size="47" text-anchor="middle" letter-spacing="0"><text x="351" y="124">N</text><text x="182" y="292">O</text><text x="519" y="293">L</text><text x="351" y="464">S</text></g>
    <text x="279" y="288" font-family="Open Sans, sans-serif" font-weight="700" font-size="38" fill="#535a65" textLength="141" lengthAdjust="spacingAndGlyphs">SUPERIOR</text>
    <rect x="280" y="532" width="142" height="52" rx="12" fill="#8f929f" stroke="#a5a8b3" stroke-width="3"/><text x="292" y="567" font-family="Liberation Sans, sans-serif" font-size="34" fill="#4c505a" textLength="72">WCS</text><path d="M382 550H407L395 563Z" fill="#9ea2b0" stroke="#b9bbc4" stroke-width="2"/>
  </svg>
  <svg class="navbar" width="34" height="216" viewBox="489 654 102 648">
    <rect x="491" y="659" width="98" height="638" rx="8" fill="#63666a" stroke="#14181d" stroke-width="3"/><path d="M494 694V662H586V694" fill="#75787b" opacity=".5"/>
    <g fill="none" stroke="#41444a" stroke-width="3"><circle cx="570" cy="675" r="10"/><path d="M565 670L575 680M575 670L565 680"/><path d="M508 750A32 32 0 0 1 540 718H572V750A32 32 0 0 1 508 750ZM515 774L527 763M565 774L552 763"/><circle cx="540" cy="750" r="18"/>
    <path d="M523 909L517 892L505 879Q507 874 513 878L523 887L520 859Q523 852 528 858L532 876L533 850Q538 840 543 850L543 876L549 850Q554 844 558 850L554 879L563 862Q570 858 572 864L562 892L554 910Z"/>
    <path d="M505 929L550 973M550 929L505 973M505 938V928H515M540 928H551V938M505 964V974H515"/><circle cx="553" cy="972" r="15"/><path d="M564 983L575 994" stroke-width="7"/>
    <path d="M539 1042L550 1055H544V1105H533V1055H528ZM532 1069C495 1070 497 1090 527 1090M546 1069C582 1071 580 1092 546 1091"/><path d="M513 1090L526 1079V1102Z" fill="#41444a"/>
    <path d="M505 1168H523V1187H505ZM529 1168H547V1187H529ZM553 1168H572V1187H553ZM505 1195H554V1234H505Z"/><path d="M521 1205L538 1215L521 1226Z" fill="#41444a"/><circle cx="570" cy="1278" r="10"/><path d="M564 1278H576" stroke-width="5"/></g>
    <path d="M533 807H550L542 816ZM533 1017H550L542 1026ZM533 1131H550L542 1140Z" fill="#41444a"/><path d="M496 829H582M496 1153H582" stroke="#707376" stroke-width="1"/>
  </svg>
  <div class="cmd">
    <div class="cmdl"><svg width="56" height="25" viewBox="1140 275 168 75"><path d="M1154 285V336M1163 285V336" stroke="#c6c8cc" stroke-width="5" stroke-dasharray="5 4.200"/><path d="M1185 298L1209 322M1209 298L1185 322" stroke="#b9bbbf" stroke-width="5"/><path d="M1249 335L1270 313" stroke="#c6c8cc" stroke-width="7"/><path d="M1267 309Q1266 297 1279 296L1275 306L1281 311L1289 304Q1290 317 1275 318Z" fill="#c6c8cc"/></svg></div>
    <svg width="36" height="25" viewBox="1308 275 108 75"><path d="M1321 298H1366V332H1321Z" fill="none" stroke="#4c4e52" stroke-width="3"/><path d="M1321 298H1366V304H1321Z" fill="#4c4e52"/><path d="M1327 311L1334 317L1327 323M1338 323H1350" fill="none" stroke="#4c4e52" stroke-width="3"/><path d="M1374 309H1398L1386 321Z" fill="#4c4e52"/></svg>
    <em>Digite um comando</em><svg class="up" width="7" height="4" viewBox="0 0 7 4"><path d="M0 4H7L3.500 0Z" fill="#4a4c50"/></svg>
  </div>
</div>

<footer class="status">
  <div class="lt on">Modelo</div><div class="lt">Layout1</div><div class="lt">Layout2</div><div class="ladd"><svg width="8" height="8" viewBox="0 0 9 9"><path d="M4.500 0V9M0 4.500H9" stroke="#a9acb2" stroke-width="2.200"/></svg></div>
  <div class="tools">
    <div class="g model">MODELO</div>
    <div class="g g2"><svg class="hi" width="22" height="22" viewBox="1424 1021 22 22"><path d="M1431.500 1024V1040M1435.500 1024V1040M1439.500 1024V1040M1427 1027.500H1442M1427 1031.500H1442M1427 1035.500H1442" stroke="#fff"/></svg><svg width="41" height="24" viewBox="1446 1020 41 24"><g stroke="#ddd" stroke-width="2" stroke-dasharray="2 3"><path d="M1453 1027H1466M1453 1032H1466M1453 1037H1466"/></g><path d="M1475 1030H1483L1479 1034.500Z" fill="#ddd"/></svg></div>
    <div class="g g3"><svg width="25" height="24" viewBox="1490 1020 25 24"><path d="M1494.500 1024V1039.500H1510M1494.500 1034.500H1499.500V1039" fill="none" stroke="#ddd"/></svg><svg class="hi" width="22" height="22" viewBox="1515 1021 22 22"><circle cx="1524" cy="1033" r="6" fill="none" stroke="#fff" stroke-width="1.300"/><path d="M1524 1033L1532 1025M1524 1033H1534M1528 1028Q1532 1032 1528 1037" fill="none" stroke="#fff" stroke-width="1.300"/></svg><svg width="57" height="24" viewBox="1537 1020 57 24"><path d="M1542 1030H1550L1546 1034.500ZM1582 1030H1590L1586 1034.500Z" fill="#ddd"/><path d="M1559 1025L1572 1038" stroke="#e0636e"/><path d="M1565.500 1024V1040" stroke="#55c878"/><circle cx="1565.500" cy="1031.500" r="1.500" fill="#eee"/></svg></div>
    <div class="g g4"><svg class="hi" width="22" height="22" viewBox="1596 1021 22 22"><path d="M1613 1025L1600 1037.500H1615" fill="none" stroke="#fff" stroke-width="1.300"/><path d="M1604 1031L1609 1036L1604 1037Z" fill="#fff"/></svg><svg class="hi two" width="22" height="22" viewBox="1620 1021 22 22"><path d="M1628 1027.500H1638.500V1039.500H1625.500V1031M1623.500 1024.500H1627.500V1028.500H1623.500Z" fill="none" stroke="#fff" stroke-width="1.200"/></svg><svg width="17" height="24" viewBox="1642 1020 17 24"><path d="M1647 1030H1655L1651 1034.500Z" fill="#ddd"/></svg></div>
    <div class="g g5"><svg class="hi" width="22" height="22" viewBox="1663 1021 22 22"><path d="M1672 1025L1675 1032L1679 1039L1674 1037H1670L1665 1039L1669 1032Z" fill="#fff"/><circle cx="1679" cy="1028.500" r="2.500" fill="none" stroke="#fff"/></svg><svg width="52" height="24" viewBox="1685 1020 52 24"><path d="M1697 1025L1700 1032L1704 1039L1699 1037H1695L1690 1039L1694 1032ZM1703 1023L1699 1029H1702L1700 1033L1705 1028H1702ZM1722 1025L1725 1032L1729 1039L1724 1037H1720L1715 1039L1719 1032Z" fill="#d8d8d8"/></svg><span>1:1</span><svg width="16" height="24" viewBox="1752 1020 16 24"><path d="M1756 1030H1764L1760 1034.500Z" fill="#ddd"/></svg></div>
    <div class="g g6"><svg width="65" height="24" viewBox="1771 1020 65 24"><circle cx="1782" cy="1032" r="4.500" fill="none" stroke="#d8d8d8" stroke-width="3.500"/><circle cx="1782" cy="1032" r="6.800" fill="none" stroke="#d8d8d8" stroke-width="2" stroke-dasharray="2.700 2.640"/><path d="M1799 1030H1807L1803 1034.500Z" fill="#ddd"/><path d="M1811.500 1020V1044" stroke="#222933"/><path d="M1824 1024V1040M1816 1032H1832" stroke="#e4e4e4" stroke-width="2"/></svg></div>
    <div class="g g7"><svg width="24" height="24" viewBox="1839 1020 24 24"><path d="M1843.500 1024.500H1849.500V1030.500H1843.500ZM1849.500 1034L1853 1039.500H1846Z" fill="none" stroke="#ddd"/><circle cx="1855.500" cy="1030.500" r="3" fill="none" stroke="#ddd"/></svg></div>
    <div class="g g8"><svg width="48" height="24" viewBox="1866 1020 48 24"><path d="M1870.500 1026.500H1885.500V1037.500H1870.500ZM1876 1034.500H1873.500V1032M1873.500 1034.500L1876.500 1032M1880 1029.500H1882.500V1032M1882.500 1029.500L1879.500 1032" fill="none" stroke="#ddd"/><path d="M1894 1026H1910M1894 1032H1910M1894 1038H1910" stroke="#ddd" stroke-width="2"/></svg></div>
  </div>
</footer>

<div class="taskbar">
  <svg width="32" height="30" viewBox="0 441 96 90"><path d="M18 466L38 464V484H18ZM41 463L66 461V484H41ZM18 487H38V507L18 505ZM41 487H66V511L41 508Z" fill="#fff"/></svg>
  <svg width="39" height="30" viewBox="96 441 117 90"><circle cx="157" cy="478" r="15" fill="none" stroke="#eee" stroke-width="4"/><path d="M146 489L129 507" stroke="#eee" stroke-width="4"/></svg>
  <svg width="37" height="30" viewBox="213 441 111 90"><circle cx="267" cy="486" r="22.500" fill="none" stroke="#b81c3c" stroke-width="4"/><ellipse cx="267" cy="486" rx="11" ry="21" fill="none" stroke="#b81c3c" stroke-width="4"/></svg>
  <svg class="run" width="37" height="30" viewBox="324 441 111 90"><path d="M354 465H372L378 471H402V507H354Z" fill="#ffd35c"/><path d="M354 465H372L378 471H354Z" fill="#e3a21a"/><path d="M363 507V486H393V507H385V496H371V507Z" fill="#3c95d8"/></svg>
  <svg width="37" height="30" viewBox="435 441 111 90"><circle cx="489" cy="486" r="24" fill="#1ed760"/><path d="M475 479Q490 474 505 481M476 487Q490 483 502 489M478 495Q489 491 499 497" fill="none" stroke="#111" stroke-width="4" stroke-linecap="round"/></svg>
  <svg class="run" width="37" height="30" viewBox="546 441 111 90"><path d="M576 510L580 496A24 24 0 1 1 588 506Z" fill="#fff"/><circle cx="600" cy="486" r="20" fill="#35c759"/><path d="M590 476Q594 472 597 480L595 484Q599 491 605 492L609 488L614 492Q612 499 604 497Q592 493 589 482Z" fill="#fff"/></svg>
  <svg width="37" height="30" viewBox="657 441 111 90"><defs><linearGradient id="steam" x2="0" y2="1"><stop stop-color="#10204e"/><stop offset="1" stop-color="#1b86bd"/></linearGradient></defs><circle cx="711" cy="486" r="24" fill="url(#steam)"/><path d="M688 486L704 493L716 480" fill="none" stroke="#fff" stroke-width="7"/><circle cx="719" cy="477" r="9" fill="#10204e" stroke="#fff" stroke-width="4"/><circle cx="703" cy="495" r="6" fill="#fff"/></svg>
  <svg class="run" width="37" height="30" viewBox="768 441 111 90"><path d="M822 486L803.800 475.500A21 21 0 0 1 840.200 475.500Z" fill="#e84a3c"/><path d="M822 486L840.200 475.500A21 21 0 0 1 822 507Z" fill="#fcc934"/><path d="M822 486L822 507A21 21 0 0 1 803.800 475.500Z" fill="#35a455"/><path d="M814 475H840.200" stroke="#e84a3c" stroke-width="5"/><circle cx="822" cy="486" r="10" fill="#fff"/><circle cx="822" cy="486" r="7.500" fill="#4285f4"/><path d="M837 525H864V531H837Z" fill="#b87a7c"/></svg>
  <svg class="run" width="37" height="30" viewBox="879 441 111 90"><path d="M909 462H957V510H909Z" fill="#f3dedb"/><path d="M914 506L928 467H939L952 506H941L938 498H926L922 506ZM929 490H936L933 479Z" fill="#c4221f" fill-rule="evenodd"/></svg>
  <svg class="run sel" width="36" height="30" viewBox="990 441 108 90"><path d="M1020 491Q1022 474 1042 472Q1060 474 1060 492Q1055 507 1038 506Q1031 497 1024 498Z" fill="#bfe2f5"/><circle cx="1031" cy="485" r="4" fill="#42a548"/><circle cx="1043" cy="481" r="4" fill="#e24b3f"/><circle cx="1052" cy="489" r="4" fill="#2c7fc4"/><circle cx="1042" cy="497" r="4" fill="#e7ad25"/><path d="M1053 464L1068 463L1064 480H1058Z" fill="#c79a6c"/><path d="M1058 480H1064L1065 504Q1061 510 1057 504Z" fill="#e2832f"/></svg>
  <time>10:55</time>
</div>
</body>
</html>
```
FILE: styles.css
```css
* { box-sizing: border-box; }
body {
  margin: 0;
  width: 1916px;
  height: 1077px;
  overflow: hidden;
  background: #222933;
  color: #f0f1f2;
  font: 12px/16px "Open Sans", "Noto Sans", sans-serif;
  letter-spacing: -.35px;
  display: flex;
  flex-direction: column;
  white-space: nowrap;
}
svg { display: block; flex: none; }
.defs { position: absolute; }

/* title bar */
.titlebar {
  height: 21px;
  flex: none;
  display: flex;
  background: #464f61;
  line-height: 17px;
}
.share { width: 273px; margin-left: -2px; color: #6bb9f5; }
.apptitle { width: 142px; color: #9ea3ad; }
.path { width: 603px; color: #9ea3ad; letter-spacing: -.33px; }
.play { margin: 3px 4px 0 0; }
.search {
  width: 180px;
  height: 19px;
  padding-left: 2px;
  border: 1px solid #222933;
  border-top: 0;
  font-style: italic;
  letter-spacing: -.57px;
  color: #b4b8c0;
  margin-right: 3px;
}
.user { width: 83px; color: #e4e5e8; }
.tsep { width: 1px; height: 16px; margin: 0 9px; background: #5a6373; }
.help {
  width: 16px;
  height: 16px;
  border-radius: 50%;
  background: #d8d8d8;
  color: #454f61;
  font-weight: 700;
  text-align: center;
  line-height: 16px;
}
.winctl { margin-left: auto; margin-right: 1px; }

/* ribbon tabs */
.tabs {
  height: 24px;
  flex: none;
  display: grid;
  grid-template-columns: 66px 52px 71px 84px 45.500px 70px 48px 102px 71.500px 88.500px 158px 30px;
  padding-top: 4px;
  line-height: 20px;
  color: #cfd1d4;
}
.tabs .on { width: 55px; background: #3b4453; color: #f0f1f2; padding-left: 9px; }

/* ribbon panels */
.ribbon { height: 99px; flex: none; display: flex; }
.panel {
  background: #3b4453;
  border-right: 1px solid #222933;
  padding-top: 5px;
  display: flex;
  flex-direction: column;
}
.w1 { width: 241px; }
.w2 { width: 292px; }
.w3 { width: 233px; }
.w4 { width: 324px; }
.w5 { width: 166px; }
.w6 { width: 284px; }
.w7 { width: 69px; }
.w8 { width: 92px; }
.w9 { width: 122px; }
.w10 { width: 92px; border: 0; }
.body { display: flex; height: 72px; }
.panel h2 {
  margin: 1px 0 0;
  height: 21px;
  font: inherit;
  line-height: 22px;
  display: flex;
  align-items: center;
  justify-content: center;
}
.panel h2 svg { width: 8px; height: 5px; margin: 1px 0 0 7px; }
.panel h2 .la { width: 6px; height: 6px; margin: 3px 4px 0 8px; }
.panel h2.wide { justify-content: flex-start; padding-left: 94px; }
.panel h2.wide .la { margin-left: auto; }
.panel h2.vista { justify-content: flex-start; padding-left: 5px; }

.big { display: flex; flex-direction: column; align-items: center; }
.big b { font-weight: 400; line-height: 18px; text-align: center; }
.big b.two { line-height: 15px; padding-top: 2px; }
.big .ar { width: 6px; height: 4px; margin-top: 1px; }
.b1 { width: 38px; }
.b2 { width: 52px; }
.b3 { width: 60px; }
.b4 { width: 46px; }
.b5 { width: 54px; }
.b6 { width: 35px; }
.b7 { width: 78px; }
.b8 { width: 42px; }
.b9 { width: 83px; }
.b10 { width: 42px; }
.b11 { width: 66px; }
.b12 { width: 49px; margin-left: 24px; }
.b13 { width: 62px; }

.col { display: flex; flex-direction: column; }
.c74 { width: 74px; }
.c92 { width: 92px; }
.c93 { width: 93px; }
.row { display: flex; align-items: center; height: 24px; }
.row .a { width: 5px; height: 3px; margin-left: 9px; }
.row .g11 { margin-left: 12px; }

.combo {
  height: 22px;
  display: flex;
  align-items: center;
  border: 1px solid #262e3a;
  background: #4d596d;
}
.combo i { flex: 1; }
.combo .ca { width: 8px; height: 5px; margin-right: 1px; }
.c208 { width: 208px; }
.c180 { width: 180px; }
.props .row + .row .combo { margin-bottom: 2px; }
.sw { width: 16px; height: 16px; margin: 0 10px 0 12px; background: #fff; border: 1px solid #aaa; }
.ln { width: 64px; height: 1px; margin: 0 2px 0 3px; background: #fff; }

/* drawing file tabs */
.files { height: 30px; flex: none; display: flex; align-items: flex-end; border-bottom: 4px solid #3b4453; }
.ftab {
  width: 134px;
  height: 22px;
  margin-left: 10px;
  padding-left: 18px;
  line-height: 23px;
  color: #b9bcc2;
  background: #303846;
  clip-path: path("M0 22Q7 20 9 8Q10 0 18 0H123Q132 0 132 10L134 22Z");
}
.cur {
  width: 138px;
  margin-left: -9px;
  padding-left: 15px;
  display: flex;
  align-items: center;
  justify-content: space-between;
  padding-right: 22px;
  font-weight: 700;
  color: #fff;
  background: #3b4453;
  clip-path: path("M0 22Q7 20 9 8Q10 0 18 0H118Q127 0 129 9Q131 20 138 22Z");
}
.fadd {
  width: 22px;
  height: 14px;
  margin: 0 0 4px -2px;
  display: flex;
  align-items: center;
  justify-content: center;
  background: #303846;
  border-radius: 2px 9px 2px 9px;
}

/* model space */
.canvas { position: relative; height: 844px; flex: none; background: #212830; }
.view { position: absolute; left: 0; top: 6px; }
.view span { letter-spacing: .3px; }
.cube { position: absolute; left: 1766px; top: 33px; }
.navbar { position: absolute; left: 1879px; top: 234px; }
.cmd {
  position: absolute;
  left: 380px;
  top: 818px;
  width: 1152px;
  height: 25px;
  display: flex;
  align-items: center;
  background: #bfc0c2;
}
.cmdl { background: #2b303d; }
.cmd em { font: italic 12px "Liberation Mono", monospace; letter-spacing: -.2px; color: #5c5e62; }
.cmd .up { margin: 0 4px 0 auto; }

/* status bar */
.status { height: 29px; flex: none; display: flex; border-top: 1px solid #50555e; }
.lt {
  height: 17px;
  width: 65px;
  text-align: center;
  line-height: 16px;
  letter-spacing: -.1px;
  color: #d4d6d9;
  background: #303846;
  clip-path: path("M0 0H65Q61 3 60 10Q58 17 54 17H12Q7 17 6 10Q4 2 0 0Z");
}
.lt.on {
  width: 76px;
  padding-left: 4px;
  margin-right: -4px;
  font-weight: 700;
  letter-spacing: -.35px;
  color: #fff;
  background: #3b4453;
  clip-path: path("M2 0H76Q71 3 70 10Q68 17 64 17H17Q12 17 11 10Q8 2 2 0Z");
}
.ladd {
  width: 22px;
  height: 15px;
  margin-left: 5px;
  display: flex;
  align-items: center;
  justify-content: center;
  background: #303846;
  border-radius: 2px 0 10px 9px;
}
.tools { margin-left: auto; margin-right: 2px; display: flex; padding-top: 1px; }
.g { height: 24px; background: #3b4453; display: flex; align-items: center; margin-left: 3px; }
.hi { background: #5f8fc4; }
.hi.two { margin-left: 2px; }
.model { width: 56px; justify-content: center; margin: 0 1px 0 0; letter-spacing: -.1px; }
.g4 { margin-left: 2px; }
.g5 { margin-left: 4px; }
.g5 span { width: 15px; padding-left: 1px; letter-spacing: -.6px; }

/* taskbar */
.taskbar { height: 30px; flex: none; display: flex; background: #101010; }
.taskbar time { margin: 6px 6px 0 auto; letter-spacing: -.8px; line-height: 18px; color: #fff; }
.run { background: linear-gradient(#f99a9a, #f99a9a) 4px 28px / 28px 2px no-repeat; }
.run.sel { background: linear-gradient(#f99a9a, #f99a9a) 0 28px / 36px 2px no-repeat, #333; }
```
